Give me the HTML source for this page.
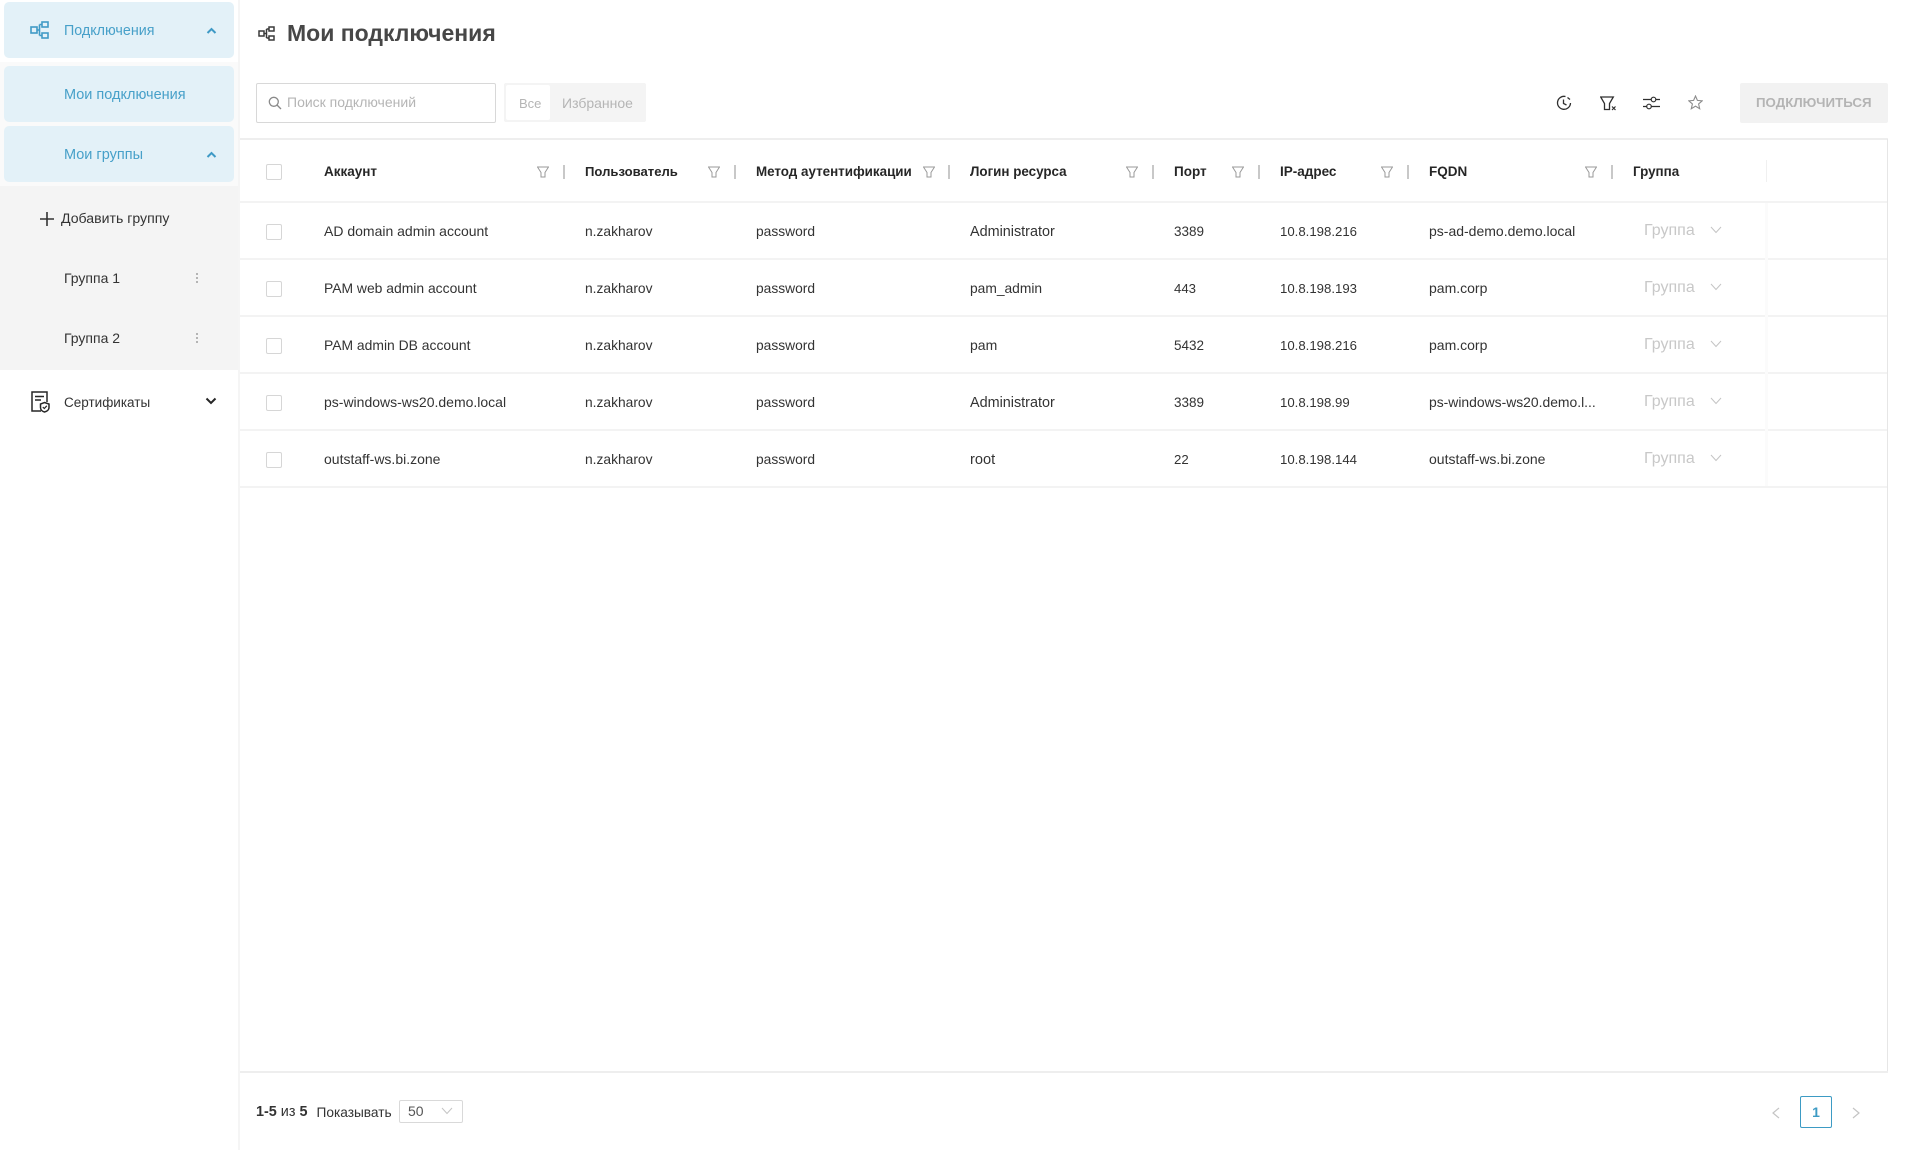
<!DOCTYPE html>
<html lang="ru"><head><meta charset="utf-8"><title>Мои подключения</title>
<style>
html,body{margin:0;padding:0;background:#fff}
body{width:1917px;height:1150px;position:relative;overflow:hidden;font-family:"Liberation Sans","Noto Sans CJK SC",sans-serif;font-size:14px;color:#333}
div,span,svg{position:absolute}
.t{height:20px;line-height:20px;white-space:nowrap}
.b{font-weight:700;color:#262626;font-size:13.4px}
.cb{left:266px;width:14px;height:14px;border:1px solid #d6d6d6;border-radius:2px;background:#fff}
.hl{left:240px;width:1647px;height:2px;background:#f3f3f3}
.bl{color:#47a0c9;font-size:14.3px;margin-top:1px}
.sep{top:165px;width:2px;height:14px;background:#c8c8c8}
.g{left:1644px;color:#c8c8c8;font-size:16px}
.n{font-size:13.2px;margin-top:1px}
.d{margin-top:1px}
.z{font-size:13.8px;margin-top:1px}
</style></head><body>

<!-- sidebar -->
<div style="left:238px;top:0;width:2px;height:1150px;background:#f5f5f5"></div>
<div style="left:0;top:62px;width:238px;height:124px;background:#fafafa"></div>
<div style="left:0;top:186px;width:238px;height:184px;background:#f4f4f4"></div>
<div style="left:4px;top:2px;width:230px;height:56px;background:#e3f1f8;border-radius:5px"></div>
<div style="left:4px;top:66px;width:230px;height:56px;background:#e3f1f8;border-radius:5px"></div>
<div style="left:4px;top:126px;width:230px;height:56px;background:#e3f1f8;border-radius:5px"></div>

<svg style="left:30px;top:21px" width="20" height="18" viewBox="0 0 20 18" fill="none" stroke="#3f9ac6" stroke-width="1.6"><rect x="1" y="6" width="6" height="6"/><rect x="12" y="1" width="6" height="5"/><rect x="12" y="12" width="6" height="5"/><path d="M7 9H9.500M9.500 3.500V14.500M9.500 3.500H12M9.500 14.500H12"/></svg>
<div class="t bl" style="left:64px;top:20px">Подключения</div>
<svg style="left:206px;top:27px" width="11" height="8" viewBox="0 0 11 8" fill="none" stroke="#3f9ac6" stroke-width="2"><path d="M1.500 6L5.500 2L9.500 6"/></svg>
<div class="t bl" style="left:64px;top:84px;font-size:14.5px">Мои подключения</div>
<div class="t bl" style="left:64px;top:144px;font-size:14.5px">Мои группы</div>
<svg style="left:206px;top:151px" width="11" height="8" viewBox="0 0 11 8" fill="none" stroke="#3f9ac6" stroke-width="2"><path d="M1.500 6L5.500 2L9.500 6"/></svg>

<svg style="left:40px;top:212px" width="14" height="14" viewBox="0 0 14 14" stroke="#333" stroke-width="1.600"><path d="M0 7H14M7 0V14"/></svg>
<div class="t" style="left:61px;top:208px;font-size:14.1px">Добавить группу</div>
<div class="t" style="left:64px;top:268px">Группа 1</div>
<div style="left:196px;top:273px;width:2px;height:2px;background:#b4b4b4;box-shadow:0 4px 0 #b4b4b4,0 8px 0 #b4b4b4"></div>
<div class="t" style="left:64px;top:328px">Группа 2</div>
<div style="left:196px;top:333px;width:2px;height:2px;background:#b4b4b4;box-shadow:0 4px 0 #b4b4b4,0 8px 0 #b4b4b4"></div>

<svg style="left:31px;top:391px" width="19" height="22" viewBox="0 0 19 22" fill="none" stroke="#262626" stroke-width="1.500"><path d="M10 20H1V1H16V11"/><path d="M4 5.500H13M4 9H10"/><path d="M13.500 11.500L18 13V16.500C18 19 15.500 20.500 13.500 21C11.500 20.500 9.500 19 9.500 16.500V13Z" fill="#fff"/><path d="M11.800 16L13.300 17.500L15.800 14.800" stroke-width="1.200"/></svg>
<div class="t d" style="left:64px;top:392px;font-size:13.5px">Сертификаты</div>
<svg style="left:205px;top:397px" width="12" height="8" viewBox="0 0 12 8" fill="none" stroke="#262626" stroke-width="2"><path d="M1.500 1.500L6 6L10.500 1.500"/></svg>

<!-- title -->
<svg style="left:258px;top:26px" width="17" height="15" viewBox="0 0 17 15" fill="none" stroke="#3a3a3a" stroke-width="1.500"><rect x="1" y="5" width="5" height="5"/><rect x="11" y="1" width="5" height="4"/><rect x="11" y="10" width="5" height="4"/><path d="M6 7.500H8.500M8.500 3V12M8.500 3H11M8.500 12H11"/></svg>
<div style="left:287px;top:18px;height:30px;line-height:30px;font-size:23px;font-weight:700;color:#474747;white-space:nowrap">Мои подключения</div>

<!-- toolbar -->
<div style="left:256px;top:83px;width:238px;height:38px;border:1px solid #d8d8d8;border-radius:2px"></div>
<svg style="left:268px;top:96px" width="14" height="14" viewBox="0 0 14 14" fill="none" stroke="#8a8a8a" stroke-width="1.300"><circle cx="5.800" cy="5.800" r="4.500"/><path d="M9 9L13 13"/></svg>
<div class="t" style="left:287px;top:92px;color:#b5b5b5">Поиск подключений</div>
<div style="left:504px;top:83px;width:142px;height:39px;background:#f4f4f4;border-radius:2px"></div>
<div style="left:506px;top:85px;width:44px;height:35px;background:#fff;border-radius:2px"></div>
<div class="t d" style="left:519px;top:93px;color:#b5b5b5;font-size:13px">Все</div>
<div class="t" style="left:562px;top:93px;color:#b5b5b5">Избранное</div>

<svg style="left:1556px;top:95px" width="16" height="16" viewBox="0 0 16 16" fill="none" stroke="#2f2f2f" stroke-width="1.300"><path d="M9.500 1.500A6.500 6.500 0 1 0 14.500 8"/><path d="M7.500 4.500V8.500L10.500 10"/><path d="M11.500 2.500L14 4.500"/></svg>
<svg style="left:1600px;top:96px" width="18" height="15" viewBox="0 0 18 15" fill="none" stroke="#2f2f2f" stroke-width="1.300"><path d="M0.700 1H13.300L9.500 7.500V13.500H4.500V7.500Z"/><path d="M12 10.500L15.500 14M15.500 10.500L12 14" stroke-width="1.200"/></svg>
<svg style="left:1643px;top:95px" width="18" height="16" viewBox="0 0 18 16" fill="none" stroke="#2f2f2f" stroke-width="1.200"><path d="M0 4.500H8M13 4.500H17M0 11.500H3.500M8.500 11.500H17"/><circle cx="10.500" cy="4.500" r="2.300"/><circle cx="6" cy="11.500" r="2.300"/></svg>
<svg style="left:1688px;top:95px" width="15" height="15" viewBox="0 0 15 15" fill="none" stroke="#8c8c8c" stroke-width="1.100"><path d="M7.500 1L9.400 5.400L14.200 5.800L10.600 9L11.700 13.700L7.500 11.200L3.300 13.700L4.400 9L0.800 5.800L5.600 5.400Z"/></svg>
<div style="left:1740px;top:83px;width:148px;height:40px;background:#f2f2f2;border-radius:2px"></div>
<div class="t" style="left:1756px;top:93px;color:#b4b4b4;font-weight:700;font-size:13.3px">ПОДКЛЮЧИТЬСЯ</div>

<!-- table frame -->
<div style="left:240px;top:138px;width:1648px;height:2px;background:#eeeeee"></div>
<div style="left:1887px;top:139px;width:1px;height:933px;background:#e6e6e6"></div>
<div style="left:240px;top:1071px;width:1648px;height:2px;background:#eeeeee"></div>
<div class="hl" style="top:201px"></div><div class="hl" style="top:258px"></div><div class="hl" style="top:315px"></div><div class="hl" style="top:372px"></div><div class="hl" style="top:429px"></div><div class="hl" style="top:486px"></div>
<div style="left:1766px;top:160px;width:1px;height:22px;background:#f0f0f0"></div>
<div style="left:1765px;top:203px;width:3px;height:283px;background:#fbfbfb"></div>

<!-- header -->
<div class="cb" style="top:164px"></div>
<div class="t b" style="left:324px;top:162px;font-size:13.5px">Аккаунт</div>
<div class="t b" style="left:585px;top:162px;font-size:13.1px">Пользователь</div>
<div class="t b" style="left:756px;top:162px">Метод аутентификации</div>
<div class="t b" style="left:970px;top:162px">Логин ресурса</div>
<div class="t b" style="left:1174px;top:162px;font-size:13.5px">Порт</div>
<div class="t b" style="left:1280px;top:162px;font-size:13.5px">IP-адрес</div>
<div class="t b" style="left:1429px;top:162px;font-size:13.5px">FQDN</div>
<div class="t b" style="left:1633px;top:162px">Группа</div>
<svg style="left:537px;top:166px" width="12" height="12" viewBox="0 0 12 12" fill="none" stroke="#999"><path d="M.5 1H11.500L8 6.500V11H4V6.500Z"/></svg>
<svg style="left:708px;top:166px" width="12" height="12" viewBox="0 0 12 12" fill="none" stroke="#999"><path d="M.5 1H11.500L8 6.500V11H4V6.500Z"/></svg>
<svg style="left:923px;top:166px" width="12" height="12" viewBox="0 0 12 12" fill="none" stroke="#999"><path d="M.5 1H11.500L8 6.500V11H4V6.500Z"/></svg>
<svg style="left:1126px;top:166px" width="12" height="12" viewBox="0 0 12 12" fill="none" stroke="#999"><path d="M.5 1H11.500L8 6.500V11H4V6.500Z"/></svg>
<svg style="left:1232px;top:166px" width="12" height="12" viewBox="0 0 12 12" fill="none" stroke="#999"><path d="M.5 1H11.500L8 6.500V11H4V6.500Z"/></svg>
<svg style="left:1381px;top:166px" width="12" height="12" viewBox="0 0 12 12" fill="none" stroke="#999"><path d="M.5 1H11.500L8 6.500V11H4V6.500Z"/></svg>
<svg style="left:1585px;top:166px" width="12" height="12" viewBox="0 0 12 12" fill="none" stroke="#999"><path d="M.5 1H11.500L8 6.500V11H4V6.500Z"/></svg>
<div class="sep" style="left:563px"></div><div class="sep" style="left:734px"></div><div class="sep" style="left:948px"></div><div class="sep" style="left:1152px"></div><div class="sep" style="left:1258px"></div><div class="sep" style="left:1407px"></div><div class="sep" style="left:1611px"></div>

<!-- row 1 -->
<div class="cb" style="top:224px"></div>
<div class="t" style="left:324px;top:221px">AD domain admin account</div>
<div class="t z" style="left:585px;top:221px">n.zakharov</div>
<div class="t z" style="left:756px;top:221px">password</div>
<div class="t d" style="left:970px;top:221px;font-size:14.4px">Administrator</div>
<div class="t d" style="left:1174px;top:221px;font-size:13.5px">3389</div>
<div class="t n" style="left:1280px;top:221px">10.8.198.216</div>
<div class="t" style="left:1429px;top:221px">ps-ad-demo.demo.local</div>
<div class="t g" style="top:221px">Группа</div>
<svg style="left:1710px;top:226px" width="12" height="8" viewBox="0 0 12 8" fill="none" stroke="#c4c4c4"><path d="M1 1L6 6.500L11 1"/></svg>

<!-- row 2 -->
<div class="cb" style="top:281px"></div>
<div class="t" style="left:324px;top:278px;font-size:13.9px">PAM web admin account</div>
<div class="t z" style="left:585px;top:278px">n.zakharov</div>
<div class="t z" style="left:756px;top:278px">password</div>
<div class="t z" style="left:970px;top:278px">pam_admin</div>
<div class="t n" style="left:1174px;top:278px">443</div>
<div class="t n" style="left:1280px;top:278px">10.8.198.193</div>
<div class="t" style="left:1429px;top:278px">pam.corp</div>
<div class="t g" style="top:278px">Группа</div>
<svg style="left:1710px;top:283px" width="12" height="8" viewBox="0 0 12 8" fill="none" stroke="#c4c4c4"><path d="M1 1L6 6.500L11 1"/></svg>

<!-- row 3 -->
<div class="cb" style="top:338px"></div>
<div class="t" style="left:324px;top:335px;font-size:13.9px">PAM admin DB account</div>
<div class="t z" style="left:585px;top:335px">n.zakharov</div>
<div class="t z" style="left:756px;top:335px">password</div>
<div class="t" style="left:970px;top:335px">pam</div>
<div class="t d" style="left:1174px;top:335px;font-size:13.5px">5432</div>
<div class="t n" style="left:1280px;top:335px">10.8.198.216</div>
<div class="t" style="left:1429px;top:335px">pam.corp</div>
<div class="t g" style="top:335px">Группа</div>
<svg style="left:1710px;top:340px" width="12" height="8" viewBox="0 0 12 8" fill="none" stroke="#c4c4c4"><path d="M1 1L6 6.500L11 1"/></svg>

<!-- row 4 -->
<div class="cb" style="top:395px"></div>
<div class="t" style="left:324px;top:392px">ps-windows-ws20.demo.local</div>
<div class="t z" style="left:585px;top:392px">n.zakharov</div>
<div class="t z" style="left:756px;top:392px">password</div>
<div class="t d" style="left:970px;top:392px;font-size:14.4px">Administrator</div>
<div class="t d" style="left:1174px;top:392px;font-size:13.5px">3389</div>
<div class="t n" style="left:1280px;top:392px">10.8.198.99</div>
<div class="t" style="left:1429px;top:392px;font-size:13.9px">ps-windows-ws20.demo.l...</div>
<div class="t g" style="top:392px">Группа</div>
<svg style="left:1710px;top:397px" width="12" height="8" viewBox="0 0 12 8" fill="none" stroke="#c4c4c4"><path d="M1 1L6 6.500L11 1"/></svg>

<!-- row 5 -->
<div class="cb" style="top:452px"></div>
<div class="t" style="left:324px;top:449px">outstaff-ws.bi.zone</div>
<div class="t z" style="left:585px;top:449px">n.zakharov</div>
<div class="t z" style="left:756px;top:449px">password</div>
<div class="t d" style="left:970px;top:449px;font-size:14.6px">root</div>
<div class="t n" style="left:1174px;top:449px">22</div>
<div class="t n" style="left:1280px;top:449px">10.8.198.144</div>
<div class="t" style="left:1429px;top:449px">outstaff-ws.bi.zone</div>
<div class="t g" style="top:449px">Группа</div>
<svg style="left:1710px;top:454px" width="12" height="8" viewBox="0 0 12 8" fill="none" stroke="#c4c4c4"><path d="M1 1L6 6.500L11 1"/></svg>

<!-- footer -->
<div class="t d" style="left:256px;top:1101px;color:#333;font-size:14.4px"><b>1-5</b> из <b>5</b></div>
<div class="t d" style="left:316.500px;top:1102px;font-size:13.7px">Показывать</div>
<div style="left:399px;top:1100px;width:62px;height:21px;border:1px solid #d9d9d9;border-radius:2px"></div>
<div class="t" style="left:408px;top:1101px;color:#555">50</div>
<svg style="left:441px;top:1107px" width="12" height="8" viewBox="0 0 12 8" fill="none" stroke="#c4c4c4"><path d="M1 1L6 6.500L11 1"/></svg>
<svg style="left:1772px;top:1107px" width="8" height="12" viewBox="0 0 8 12" fill="none" stroke="#c4c4c4" stroke-width="1.200"><path d="M7 1L1 6L7 11"/></svg>
<div style="left:1800px;top:1096px;width:30px;height:30px;border:1px solid #3d9bc4;border-radius:2px;color:#3d9bc4;font-weight:700;text-align:center;line-height:30px">1</div>
<svg style="left:1852px;top:1107px" width="8" height="12" viewBox="0 0 8 12" fill="none" stroke="#c4c4c4" stroke-width="1.200"><path d="M1 1L7 6L1 11"/></svg>
</body></html>
